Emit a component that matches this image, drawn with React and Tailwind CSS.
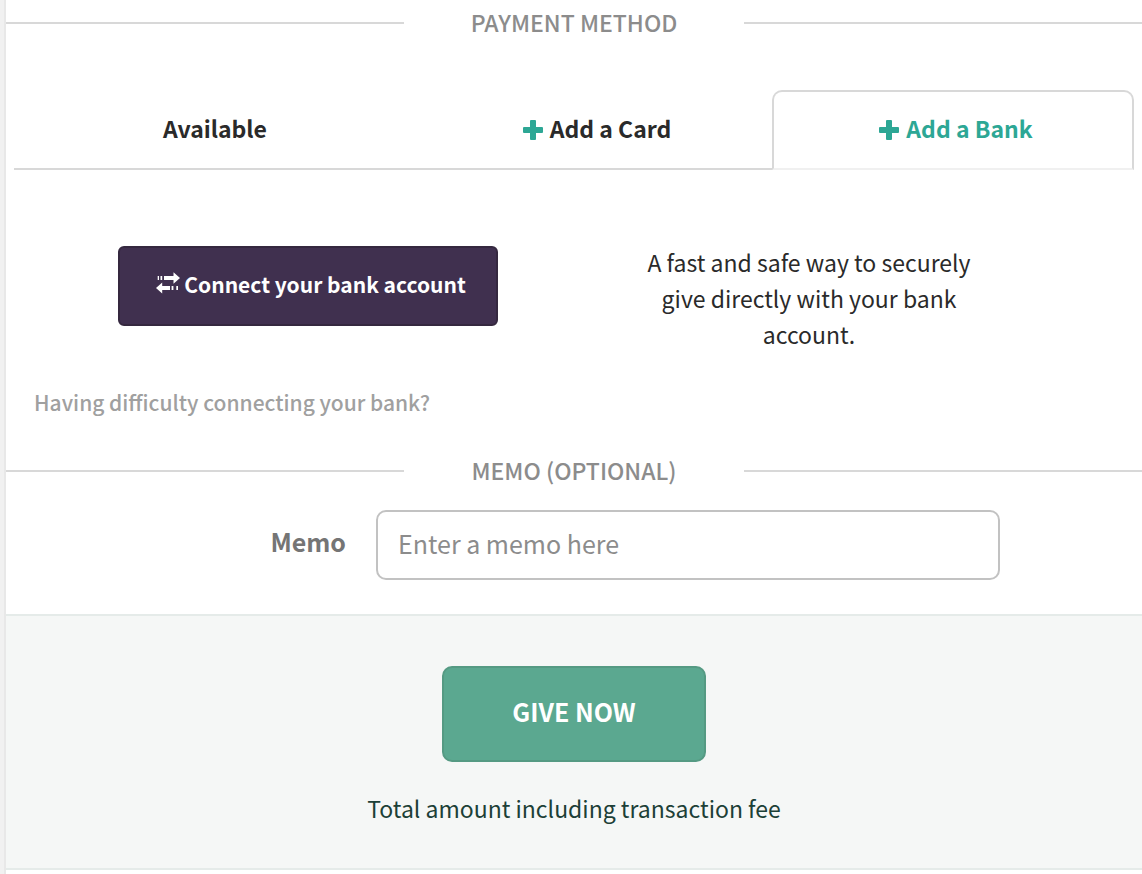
import React, { useState } from 'react';

const PlusIcon = () => (
  <svg className="w-5 h-5 mt-1 shrink-0" viewBox="0 0 20 20" fill="#2da795" aria-hidden="true">
    <rect x="0" y="7" width="20" height="6" rx="1" />
    <rect x="7" y="0" width="6" height="20" rx="1" />
  </svg>
);

const TransferIcon = () => (
  <svg className="w-6 h-6 mb-0.5 shrink-0" viewBox="0 0 24 24" fill="currentColor" aria-hidden="true">
    <path d="M1.7 4H3v4H1.7zM4.5 4H6.2v4H4.5zM8 4H17.5V0.3L24 6L17.5 11.7V8H8z" />
    <path d="M22 14H20.3v4H22zM17.4 14H15.6v4H17.4zM14 14H6.2V10.6L0 16L6.2 21.4V18H14z" />
  </svg>
);

const SectionHeading = ({ children }) => (
  <div className="flex items-center">
    <div className="flex-1 h-[2px] bg-[#d8d8d8]" />
    <h2 className="w-[30%] pb-0.5 text-center text-[23px] leading-8 font-medium text-[#8c8c8c]">{children}</h2>
    <div className="flex-1 h-[2px] bg-[#d8d8d8]" />
  </div>
);

const tabs = [
  { id: 'available', label: 'Available', hasIcon: false },
  { id: 'card', label: 'Add a Card', hasIcon: true },
  { id: 'bank', label: 'Add a Bank', hasIcon: true },
];

const App = () => {
  const [activeTab, setActiveTab] = useState('bank');
  const [memo, setMemo] = useState('');

  return (
    <div className="min-h-screen bg-[#f1f1f1] pl-1 font-['Noto_Sans_CJK_JP','Noto_Sans',sans-serif] text-[#2a2a2a]">
      <form
        className="min-h-screen bg-white border-l-2 border-[#e8e8e8] pt-1.5"
        onSubmit={(e) => e.preventDefault()}
      >
        <SectionHeading>PAYMENT METHOD</SectionHeading>

        {/* Payment method tabs */}
        <div className="mx-2 mt-[50px] grid grid-cols-[402fr_356fr_362fr]" role="tablist">
          {tabs.map((tab) => (
            <button
              key={tab.id}
              type="button"
              role="tab"
              aria-selected={activeTab === tab.id}
              onClick={() => setActiveTab(tab.id)}
              className={`h-20 pb-1 flex items-center justify-center gap-[7px] text-[23px] font-bold ${
                tab.hasIcon ? 'pl-1.5' : ''
              } ${
                activeTab === tab.id
                  ? 'rounded-t-[10px] border-2 border-[#d8d8d8] border-b-[#f0f0f0] text-[#2da795]'
                  : 'border-b-2 border-[#d8d8d8] pt-0.5'
              }`}
            >
              {tab.hasIcon && <PlusIcon />}
              {tab.label}
            </button>
          ))}
        </div>

        {/* Bank connection */}
        <div className="mt-[74px] pl-2 pr-[126px] grid grid-cols-[588fr_414fr]">
          <div className="pt-0.5">
            <button
              type="button"
              className="mx-auto w-[380px] h-20 pl-1.5 pb-0.5 flex items-center justify-center gap-1 rounded-md border-2 border-[#35283f] bg-[#40304f] text-[21px] font-bold text-white"
            >
              <TransferIcon />
              Connect your bank account
            </button>
          </div>
          <p className="mx-auto max-w-[342px] text-center text-[23px] leading-9">
            A fast and safe way to securely give directly with your bank account.
          </p>
        </div>
        <a href="#help" className="mt-[34px] ml-7 inline-block text-[21px] leading-8 font-medium text-[#a0a0a0]">
          Having difficulty connecting your bank?
        </a>

        <div className="mt-9">
          <SectionHeading>MEMO (OPTIONAL)</SectionHeading>
        </div>

        {/* Memo field */}
        <div className="mt-[22px] pr-[142px] flex items-center">
          <label htmlFor="memo" className="w-[340px] pb-1.5 text-right text-[25px] font-bold text-[#757575]">
            Memo
          </label>
          <input
            id="memo"
            type="text"
            value={memo}
            onChange={(e) => setMemo(e.target.value)}
            placeholder="Enter a memo here"
            className="ml-[30px] flex-1 min-w-0 h-[70px] px-5 pb-1 rounded-[10px] border-2 border-[#c2c2c2] bg-white text-[25px] placeholder:text-[#8c8c8c]"
          />
        </div>

        {/* Submit */}
        <div className="mt-[34px] h-64 pt-[50px] border-y-2 border-[#e5ebe9] bg-[#f5f7f6] text-center">
          <button
            type="submit"
            className="w-[264px] h-24 pb-1 rounded-[10px] border-2 border-[#559a83] bg-[#5ba890] text-[25px] font-bold text-white"
          >
            GIVE NOW
          </button>
          <p className="mt-[30px] text-[23px] leading-8 text-[#1c4037]">Total amount including transaction fee</p>
        </div>
      </form>
    </div>
  );
};

export default App;
